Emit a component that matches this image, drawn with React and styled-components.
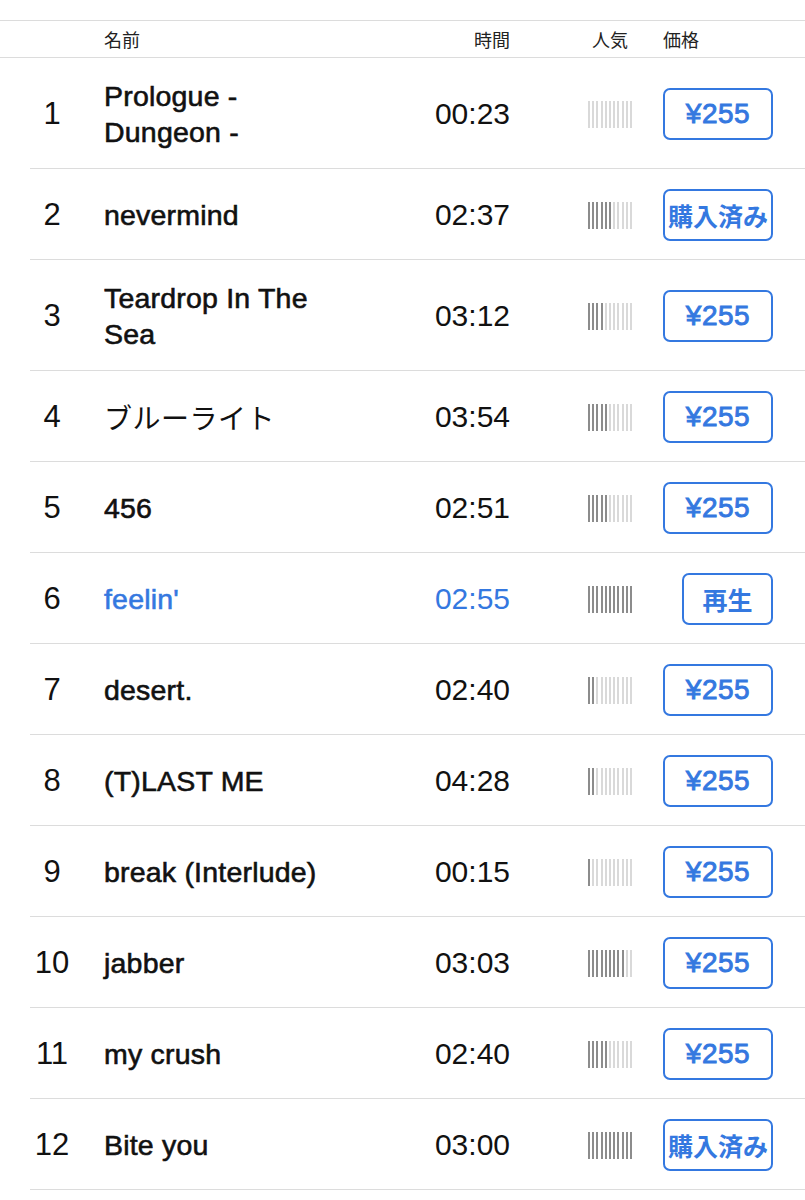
import React from "react";
import styled, { createGlobalStyle } from "styled-components";

const GlobalStyle = createGlobalStyle`
  html, body { margin: 0; padding: 0; background: #fff; }
  body { font-family: "Liberation Sans", "Noto Sans CJK JP", sans-serif; color: #111; }
`;

const BLUE = "#3478e0";
const COLS = "44px 261px 175px 153px 110px";

const Page = styled.div`
  padding-top: 20px;
  width: 805px;
`;

const Header = styled.div`
  display: grid;
  grid-template-columns: ${COLS};
  align-items: center;
  height: 36px;
  padding-left: 30px;
  border-top: 1px solid #dcdcdc;
  border-bottom: 1px solid #dcdcdc;
  font-family: "Noto Sans CJK JP", sans-serif;
  font-size: 18px;
  color: #222;
`;

const HeadCell = styled.div`
  text-align: ${(p) => p.$align || "left"};
  padding-left: ${(p) => p.$pl || 0}px;
`;

const List = styled.div`
  display: flex;
  flex-direction: column;
`;

const Row = styled.div`
  display: grid;
  grid-template-columns: ${COLS};
  align-items: center;
  margin-left: 30px;
  padding: 20px 0 18px;
  border-bottom: 1px solid #dcdcdc;
`;

const Num = styled.div`
  text-align: center;
  font-size: 31px;
  line-height: 36px;
  color: #111;
`;

const Title = styled.div`
  padding-left: 30px;
  font-size: ${(p) => (p.$cjk ? 28 : 28.5)}px;
  line-height: 36px;
  font-weight: 400;
  font-family: ${(p) =>
    p.$cjk ? `"Noto Sans CJK JP", sans-serif` : `"Liberation Sans", "Noto Sans CJK JP", sans-serif`};
  -webkit-text-stroke: ${(p) => (p.$cjk ? "0" : "0.6px")} currentColor;
  color: ${(p) => (p.$active ? BLUE : "#111")};
  letter-spacing: ${(p) => (p.$cjk ? "0.5px" : "0.2px")};
`;

const Time = styled.div`
  text-align: right;
  font-size: 30px;
  line-height: 36px;
  color: ${(p) => (p.$active ? BLUE : "#111")};
`;

const Pop = styled.div`
  padding-left: 78px;
  display: flex;
  align-items: center;
`;

const Bars = styled.div`
  width: 44px;
  height: 27px;
  display: flex;
  justify-content: space-between;
`;

const Bar = styled.span`
  width: 2px;
  height: 100%;
  background: ${(p) => (p.$on ? "#8c8c8c" : "#d9d9d9")};
`;

const PriceCell = styled.div`
  display: flex;
  justify-content: flex-end;
`;

const Button = styled.button`
  box-sizing: border-box;
  width: ${(p) => (p.$narrow ? 91 : 110)}px;
  height: 52px;
  border: 2px solid ${BLUE};
  border-radius: 7px;
  background: #fff;
  color: ${BLUE};
  font-family: ${(p) =>
    p.$cjk ? `"Noto Sans CJK JP", sans-serif` : `"Liberation Sans", sans-serif`};
  font-weight: ${(p) => (p.$cjk ? 700 : 400)};
  -webkit-text-stroke: ${(p) => (p.$cjk ? "0" : "0.9px")} currentColor;
  letter-spacing: ${(p) => (p.$cjk ? "0" : "0.5px")};
  font-size: ${(p) => (p.$cjk ? 25 : 28)}px;
  padding: 0;
  display: flex;
  align-items: center;
  justify-content: center;
`;

const tracks = [
  { n: 1, title: "Prologue - Dungeon -", time: "00:23", pop: 0, kind: "price" },
  { n: 2, title: "nevermind", time: "02:37", pop: 6, kind: "owned" },
  { n: 3, title: "Teardrop In The Sea", time: "03:12", pop: 4, kind: "price" },
  { n: 4, title: "ブルーライト", time: "03:54", pop: 5, kind: "price", cjk: true },
  { n: 5, title: "456", time: "02:51", pop: 5, kind: "price" },
  { n: 6, title: "feelin'", time: "02:55", pop: 11, kind: "play", active: true },
  { n: 7, title: "desert.", time: "02:40", pop: 2, kind: "price" },
  { n: 8, title: "(T)LAST ME", time: "04:28", pop: 2, kind: "price" },
  { n: 9, title: "break (Interlude)", time: "00:15", pop: 1, kind: "price" },
  { n: 10, title: "jabber", time: "03:03", pop: 9, kind: "price" },
  { n: 11, title: "my crush", time: "02:40", pop: 5, kind: "price" },
  { n: 12, title: "Bite you", time: "03:00", pop: 11, kind: "owned" },
];

function Popularity({ level }) {
  return (
    <Bars>
      {Array.from({ length: 11 }, (_, i) => (
        <Bar key={i} $on={i < level} />
      ))}
    </Bars>
  );
}

function PriceButton({ kind }) {
  if (kind === "owned") return <Button $cjk>購入済み</Button>;
  if (kind === "play")
    return (
      <Button $cjk $narrow>
        再生
      </Button>
    );
  return <Button>¥255</Button>;
}

export default function App() {
  return (
    <Page>
      <GlobalStyle />
      <Header>
        <HeadCell />
        <HeadCell $pl={30}>名前</HeadCell>
        <HeadCell $align="right">時間</HeadCell>
        <HeadCell $pl={82}>人気</HeadCell>
        <HeadCell>価格</HeadCell>
      </Header>
      <List>
        {tracks.map((t) => (
          <Row key={t.n}>
            <Num>{t.n}</Num>
            <Title $active={t.active} $cjk={t.cjk}>
              {t.title}
            </Title>
            <Time $active={t.active}>{t.time}</Time>
            <Pop>
              <Popularity level={t.pop} />
            </Pop>
            <PriceCell>
              <PriceButton kind={t.kind} />
            </PriceCell>
          </Row>
        ))}
      </List>
    </Page>
  );
}
